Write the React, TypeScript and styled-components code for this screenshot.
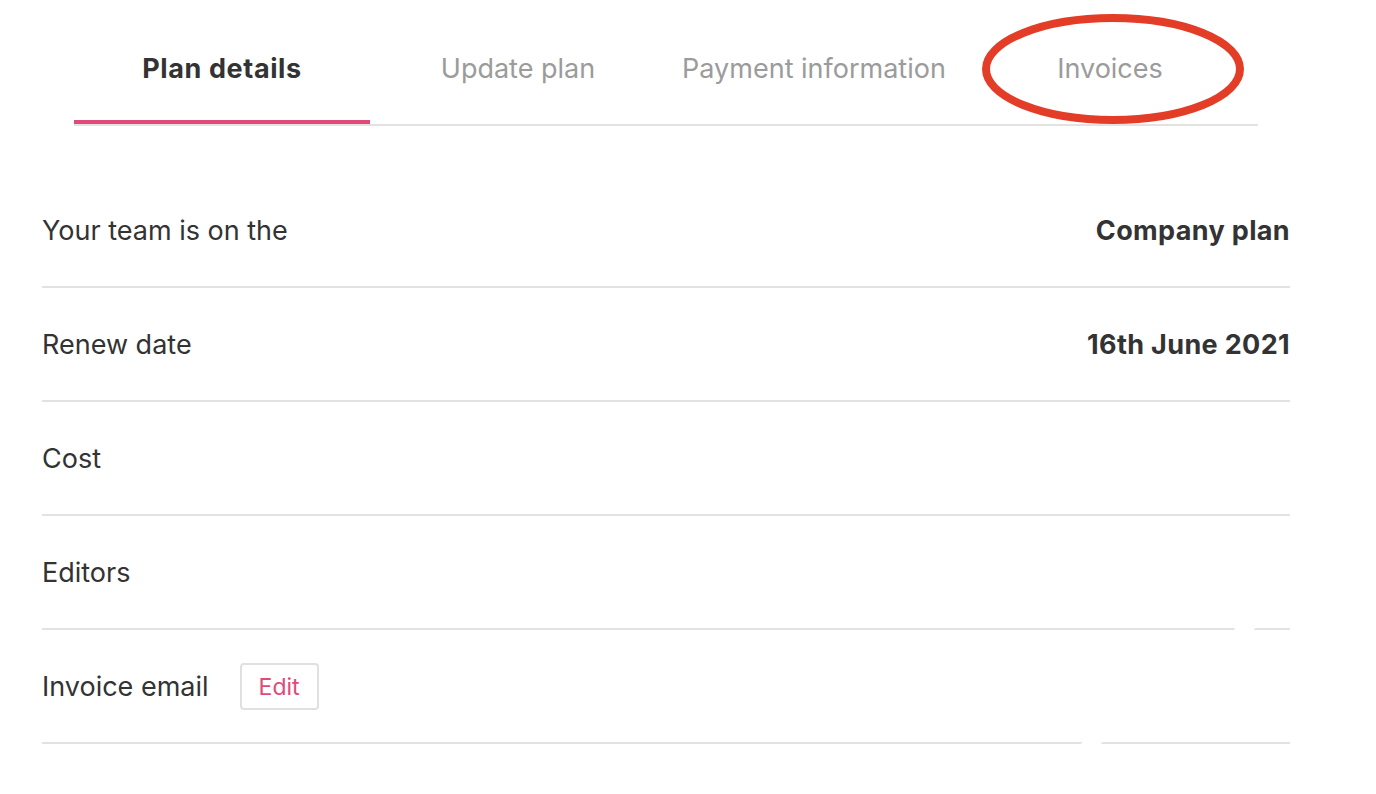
import React from "react";
import styled, { createGlobalStyle } from "styled-components";

const GlobalStyle = createGlobalStyle`
  body {
    margin: 0;
    background: #ffffff;
    font-family: Inter, "Noto Sans", "Liberation Sans", sans-serif;
    color: #333333;
  }
`;

const pink = "#df4a79";

const Page = styled.div`
  position: relative;
  width: 1376px;
  height: 794px;
  padding: 0 86px 0 42px;
  box-sizing: border-box;
  overflow: hidden;
`;

const TabList = styled.div`
  display: grid;
  grid-template-columns: repeat(4, 296px);
  margin: 0 32px;
  border-bottom: 2px solid #e2e2e2;
`;

const Tab = styled.div<{ $active?: boolean }>`
  position: relative;
  height: 124px;
  box-sizing: border-box;
  padding-top: 51px;
  line-height: 36px;
  text-align: center;
  font-size: 27px;
  font-weight: ${(p) => (p.$active ? 700 : 400)};
  letter-spacing: ${(p) => (p.$active ? "0.6px" : "0")};
  color: ${(p) => (p.$active ? "#333333" : "#9b9b9b")};
  border-bottom: 4px solid ${(p) => (p.$active ? pink : "transparent")};
`;

const Circle = styled.svg`
  position: absolute;
  left: 20px;
  top: 10px;
  overflow: visible;
`;

const Rows = styled.div`
  margin-top: 48px;
`;

const Row = styled.div`
  position: relative;
  display: flex;
  align-items: center;
  justify-content: space-between;
  height: 114px;
  box-sizing: border-box;
  padding-top: 1px;
  border-bottom: 2px solid #e2e2e2;
  font-size: 27px;
`;

const Label = styled.div`
  display: flex;
  align-items: center;
  gap: 31px;
`;

const Value = styled.div`
  font-weight: 700;
  letter-spacing: 0.35px;
`;

const EditButton = styled.button`
  width: 79px;
  height: 47px;
  border: 2px solid #e0e0e0;
  border-radius: 4px;
  background: #fff;
  color: ${pink};
  font-family: inherit;
  font-size: 23px;
  padding: 0;
`;

const Gap = styled.div<{ $left: number }>`
  position: absolute;
  bottom: -2px;
  left: ${(p) => p.$left}px;
  width: 20px;
  height: 3px;
  background: #fff;
  transform: skewX(-40deg);
`;

const tabs = ["Plan details", "Update plan", "Payment information", "Invoices"];

const rows: { label: string; value?: string; edit?: boolean; gap?: number }[] = [
  { label: "Your team is on the", value: "Company plan" },
  { label: "Renew date", value: "16th June 2021" },
  { label: "Cost" },
  { label: "Editors", gap: 1193 },
  { label: "Invoice email", edit: true, gap: 1040 },
];

export default function App() {
  return (
    <>
      <GlobalStyle />
      <Page>
        <TabList>
          {tabs.map((t, i) => (
            <Tab key={t} $active={i === 0}>
              {t}
              {t === "Invoices" && (
                <Circle width="262" height="112" viewBox="0 0 262 112">
                  <ellipse
                    cx="131"
                    cy="59"
                    rx="127"
                    ry="51"
                    fill="none"
                    stroke="#e33d28"
                    strokeWidth="8"
                  />
                </Circle>
              )}
            </Tab>
          ))}
        </TabList>
        <Rows>
          {rows.map((r) => (
            <Row key={r.label}>
              <Label>
                {r.label}
                {r.edit && <EditButton>Edit</EditButton>}
              </Label>
              {r.value && <Value>{r.value}</Value>}
              {r.gap !== undefined && <Gap $left={r.gap} />}
            </Row>
          ))}
        </Rows>
      </Page>
    </>
  );
}
